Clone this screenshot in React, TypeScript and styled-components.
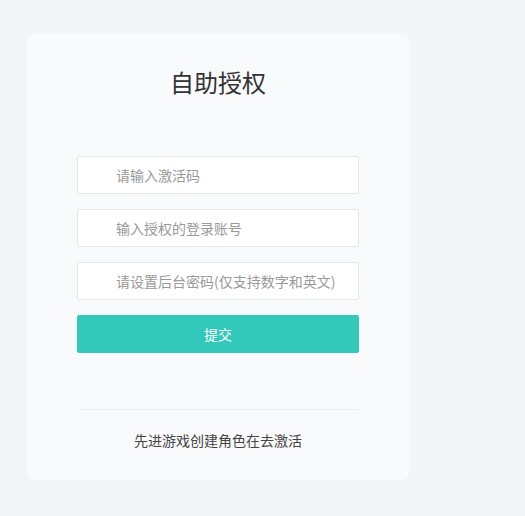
import React from "react";
import styled, { createGlobalStyle } from "styled-components";

const GlobalStyle = createGlobalStyle`
  html, body { margin: 0; padding: 0; background: #f4f5f9; }
  body { font-family: "Noto Sans CJK SC", "Noto Sans", sans-serif; }
  * { box-sizing: border-box; }
`;

const Page = styled.div`
  min-height: 100vh;
  padding: 33px 0 0 27px;
  background: #f4f5f9;
`;

const Card = styled.div`
  width: 382px;
  height: 447px;
  border-radius: 8px;
  background: #f9fafc;
  padding: 32px 50px 0;
  display: flex;
  flex-direction: column;
`;

const Title = styled.h1`
  margin: 0 0 57px;
  font-size: 24px;
  line-height: 34px;
  font-weight: 400;
  color: #333;
  text-align: center;
`;

const Field = styled.input`
  display: block;
  width: 100%;
  height: 38px;
  margin: 0 0 15px;
  padding: 0 10px 0 38px;
  border: 1px solid #e6e6e6;
  border-radius: 2px;
  background: #fff;
  font-family: inherit;
  font-size: 14px;
  color: #333;
  outline: none;
  &::placeholder { color: #999; }
`;

const Submit = styled.button`
  display: block;
  width: 100%;
  height: 38px;
  border: none;
  border-radius: 2px;
  background: #33c9ba;
  color: #fff;
  font-family: inherit;
  font-size: 14px;
  cursor: pointer;
`;

const Divider = styled.div`
  height: 1px;
  margin-top: 56px;
  background: #eceef2;
`;

const Footer = styled.p`
  margin: 20px 0 0;
  font-size: 14px;
  line-height: 20px;
  color: #444;
  text-align: center;
`;

export default function App() {
  return (
    <>
      <GlobalStyle />
      <Page>
        <Card>
          <Title>自助授权</Title>
          <Field placeholder="请输入激活码" />
          <Field placeholder="输入授权的登录账号" />
          <Field placeholder="请设置后台密码(仅支持数字和英文)" />
          <Submit>提交</Submit>
          <Divider />
          <Footer>先进游戏创建角色在去激活</Footer>
        </Card>
      </Page>
    </>
  );
}
